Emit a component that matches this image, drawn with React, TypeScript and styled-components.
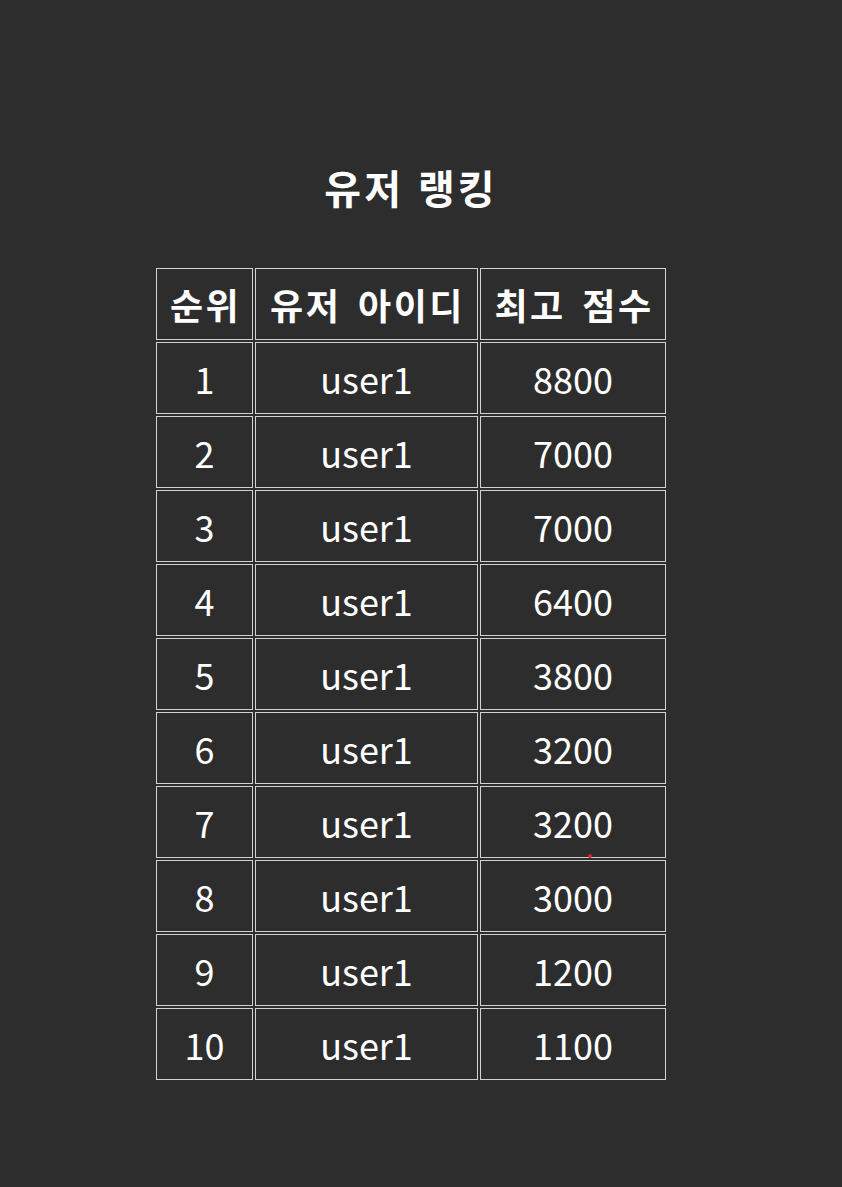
import React from "react";
import styled, { createGlobalStyle } from "styled-components";

type Rank = {
  rank: number;
  userId: string;
  score: number;
};

const rankings: Rank[] = [
  { rank: 1, userId: "user1", score: 8800 },
  { rank: 2, userId: "user1", score: 7000 },
  { rank: 3, userId: "user1", score: 7000 },
  { rank: 4, userId: "user1", score: 6400 },
  { rank: 5, userId: "user1", score: 3800 },
  { rank: 6, userId: "user1", score: 3200 },
  { rank: 7, userId: "user1", score: 3200 },
  { rank: 8, userId: "user1", score: 3000 },
  { rank: 9, userId: "user1", score: 1200 },
  { rank: 10, userId: "user1", score: 1100 },
];

const App: React.FC = () => {
  return (
    <>
      <GlobalStyle />
      <SPage>
        <STitle>유저 랭킹</STitle>
        <STable>
          <colgroup>
            <col style={{ width: 97 }} />
            <col style={{ width: 223 }} />
            <col style={{ width: 186 }} />
          </colgroup>
          <thead>
            <tr>
              <SHeadCell>순위</SHeadCell>
              <SHeadCell>유저 아이디</SHeadCell>
              <SHeadCell>최고 점수</SHeadCell>
            </tr>
          </thead>
          <tbody>
            {rankings.map((row) => (
              <tr key={row.rank}>
                <SCell>{row.rank}</SCell>
                <SCell>{row.userId}</SCell>
                <SCell>{row.score}</SCell>
              </tr>
            ))}
          </tbody>
        </STable>
        <SCursorDot />
      </SPage>
    </>
  );
};

export default App;

const GlobalStyle = createGlobalStyle`
  html, body {
    margin: 0;
    padding: 0;
    background: #2d2d2d;
  }
  body {
    font-family: "Noto Sans CJK KR", "Noto Sans", sans-serif;
    color: #ffffff;
  }
`;

const SPage = styled.div`
  position: relative;
  min-height: 1187px;
  display: flex;
  flex-direction: column;
  align-items: center;
  padding-right: 20px;
  box-sizing: border-box;
`;

const STitle = styled.h1`
  margin: 157px 0 0;
  font-size: 40px;
  line-height: 60px;
  font-weight: 700;
  letter-spacing: 3px;
  word-spacing: 2px;
`;

const STable = styled.table`
  margin-top: 49px;
  border-collapse: separate;
  border-spacing: 2px;
  table-layout: fixed;
`;

const SCellBase = styled.td`
  box-sizing: border-box;
  height: 72px;
  padding: 0;
  border: 1px solid #d2d2d2;
  text-align: center;
  vertical-align: middle;
  font-size: 36px;
  line-height: 1;
  white-space: nowrap;
`;

const SHeadCell = styled(SCellBase).attrs({ as: "th" })`
  font-weight: 700;
  letter-spacing: 2.5px;
  word-spacing: 6px;
  text-indent: 2px;
`;

const SCell = styled(SCellBase)`
  font-weight: 400;
`;

const SCursorDot = styled.div`
  position: absolute;
  left: 588px;
  top: 854px;
  width: 4px;
  height: 4px;
  border-radius: 50%;
  background: #e0202a;
`;
